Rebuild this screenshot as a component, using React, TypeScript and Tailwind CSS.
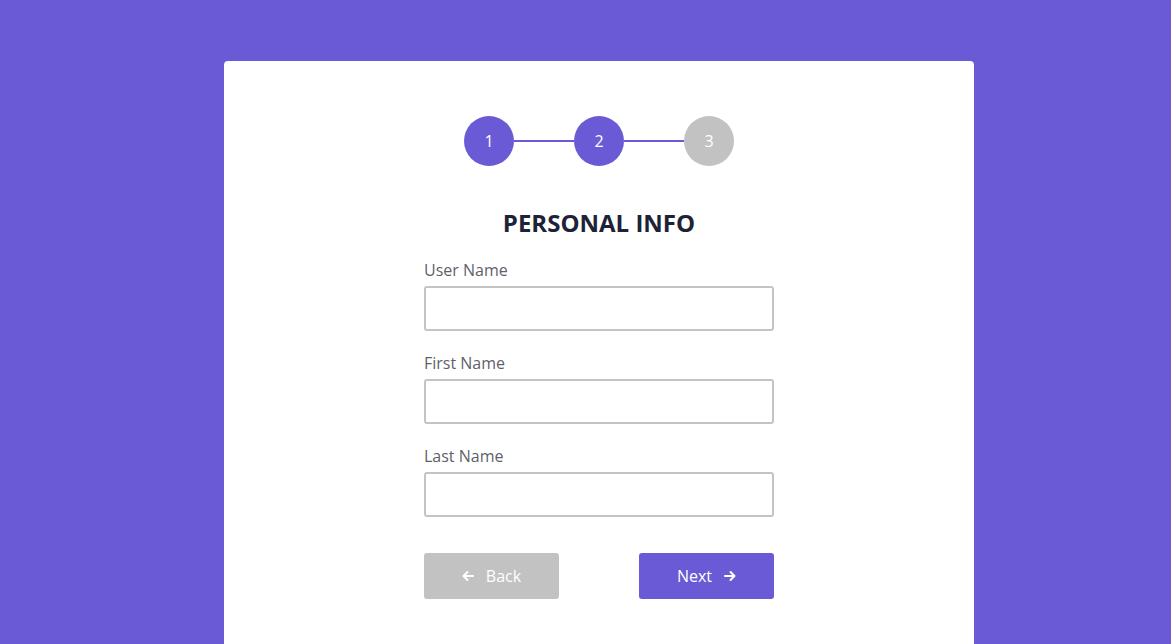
import React from "react";

function Field({ label }: { label: string }) {
  return (
    <div className="flex flex-col">
      <label className="text-[16px] leading-[24px] text-[#5f5f6b]">{label}</label>
      <input className="mt-[4px] h-[45px] w-full rounded-[3px] border-2 border-[#c4c4c4] bg-white px-3 outline-none" />
    </div>
  );
}

export default function App() {
  return (
    <div
      className="flex min-h-[644px] w-full justify-start bg-[#6b5ad5] pl-[224px] pt-[61px]"
      style={{ fontFamily: '"Open Sans", sans-serif' }}
    >
      <div className="flex h-[583px] w-[750px] flex-col items-center rounded-t-[4px] bg-white pt-[55px]">
        <div className="flex items-center">
          <div className="flex h-[50px] w-[50px] items-center justify-center rounded-full bg-[#6b5ad5] text-[16px] text-white">1</div>
          <div className="h-[2px] w-[60px] bg-[#6b5ad5]" />
          <div className="flex h-[50px] w-[50px] items-center justify-center rounded-full bg-[#6b5ad5] text-[16px] text-white">2</div>
          <div className="h-[2px] w-[60px] bg-[#6b5ad5]" />
          <div className="flex h-[50px] w-[50px] items-center justify-center rounded-full bg-[#c2c2c2] text-[16px] text-white">3</div>
        </div>
        <h1 className="mt-[41px] text-[24px] font-bold leading-[32px] text-[#1e2236]">PERSONAL INFO</h1>
        <div className="mt-[19px] flex w-[350px] flex-col gap-[20px]">
          <Field label="User Name" />
          <Field label="First Name" />
          <Field label="Last Name" />
        </div>
        <div className="mt-[36px] flex w-[350px] justify-between">
          <button className="flex h-[46px] w-[135px] items-center justify-center gap-[12px] rounded-[3px] bg-[#c2c2c2] text-[16px] text-white">
            <svg width="12" height="12" viewBox="0 0 12 12" fill="none" stroke="white" strokeWidth="2" strokeLinecap="round" strokeLinejoin="round">
              <path d="M11 6H1.5M5.5 2L1.5 6l4 4" />
            </svg>
            <span>Back</span>
          </button>
          <button className="flex h-[46px] w-[135px] items-center justify-center gap-[12px] rounded-[3px] bg-[#6b5ad5] text-[16px] text-white">
            <span>Next</span>
            <svg width="12" height="12" viewBox="0 0 12 12" fill="none" stroke="white" strokeWidth="2" strokeLinecap="round" strokeLinejoin="round">
              <path d="M1 6h9.5M6.5 2l4 4-4 4" />
            </svg>
          </button>
        </div>
      </div>
    </div>
  );
}
